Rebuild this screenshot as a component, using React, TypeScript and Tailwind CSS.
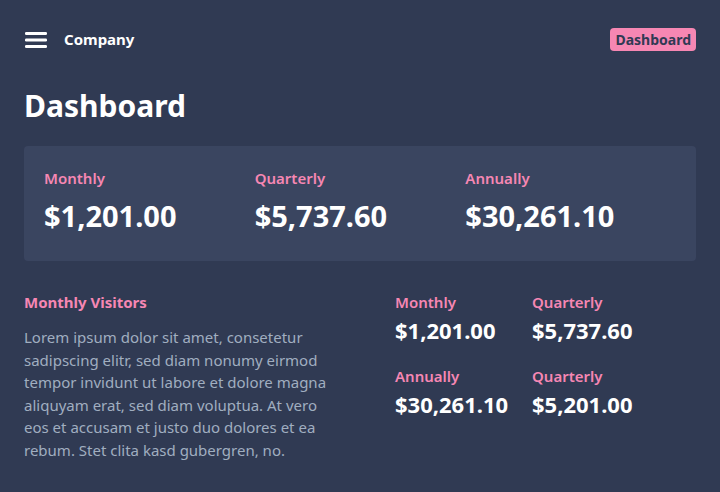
const stats = [
  { label: "Monthly", value: "$1,201.00" },
  { label: "Quarterly", value: "$5,737.60" },
  { label: "Annually", value: "$30,261.10" },
];

const small = [
  { label: "Monthly", value: "$1,201.00" },
  { label: "Quarterly", value: "$5,737.60" },
  { label: "Annually", value: "$30,261.10" },
  { label: "Quarterly", value: "$5,201.00" },
];

export default function App() {
  return (
    <div
      className="min-h-screen w-[720px] h-[492px] bg-[#303a53] px-6 text-white"
      style={{ fontFamily: '"Noto Sans", sans-serif' }}
    >
      <header className="flex h-[79px] items-center justify-between">
        <div className="flex items-center gap-[17px]">
          <svg width="22" height="18" viewBox="0 0 22 18" className="ml-px">
            <rect x="0" y="1" width="22" height="3" rx="1.2" fill="white" />
            <rect x="0" y="7.5" width="22" height="3" rx="1.2" fill="white" />
            <rect x="0" y="14" width="22" height="3" rx="1.2" fill="white" />
          </svg>
          <span className="text-[15px] font-bold">Company</span>
        </div>
        <span className="rounded bg-[#f687b3] px-[5px] py-px text-[14px] font-bold text-[#303a53]">
          Dashboard
        </span>
      </header>

      <h1 className="mt-[7px] text-[30px] font-bold leading-[40px]">Dashboard</h1>

      <div className="mt-[20px] grid h-[115px] grid-cols-3 rounded bg-[#3a4560] px-5 pt-[21px]">
        {stats.map((s) => (
          <div key={s.label}>
            <div className="text-[15px] font-semibold leading-[22px] text-[#f687b3]">{s.label}</div>
            <div className="mt-[8px] text-[29px] font-bold leading-[38px]">{s.value}</div>
          </div>
        ))}
      </div>

      <div className="mt-[30px] flex items-start">
        <div className="w-[330px]">
          <h2 className="text-[15px] font-bold leading-[22px] text-[#f687b3]">Monthly Visitors</h2>
          <p className="mt-[13px] w-[316px] text-[15px] leading-[22.6px] text-[#a0aec0]">
            Lorem ipsum dolor sit amet, consetetur sadipscing elitr, sed diam nonumy eirmod tempor
            invidunt ut labore et dolore magna aliquyam erat, sed diam voluptua. At vero eos et
            accusam et justo duo dolores et ea rebum. Stet clita kasd gubergren, no.
          </p>
        </div>
        <div className="ml-[41px] grid grid-cols-[137px_auto] gap-y-[20px]">
          {small.map((s, i) => (
            <div key={i}>
              <div className="text-[15px] font-semibold leading-[22px] text-[#f687b3]">{s.label}</div>
              <div className="mt-[2px] text-[22px] font-bold leading-[30px]">{s.value}</div>
            </div>
          ))}
        </div>
      </div>
    </div>
  );
}
